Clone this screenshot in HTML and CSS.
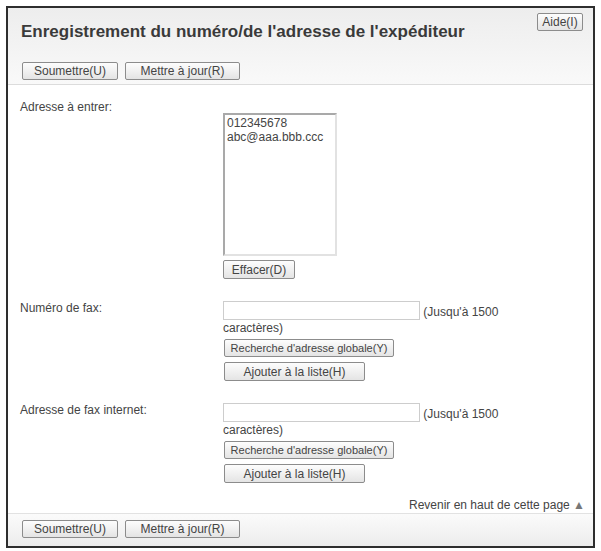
FILE: index.html
```html
<!DOCTYPE html>
<html lang="fr">
<head>
<meta charset="utf-8">
<title>Enregistrement</title>
<link rel="stylesheet" href="styles.css">
</head>
<body>
<div class="panel">
  <div class="header">
    <h1 class="title">Enregistrement du numéro/de l'adresse de l'expéditeur</h1>
    <button class="btn btn-help">Aide(I)</button>
    <div class="btn-row">
      <button class="btn btn-submit">Soumettre(U)</button>
      <button class="btn btn-update">Mettre à jour(R)</button>
    </div>
  </div>

  <div class="content">
    <div class="row row-first">
      <div class="label">Adresse à entrer:</div>
      <div class="field field-list">
        <div class="list">012345678<br>abc@aaa.bbb.ccc</div>
        <button class="btn btn-clear">Effacer(D)</button>
      </div>
    </div>

    <div class="row">
      <div class="label">Numéro de fax:</div>
      <div class="field">
        <span class="text-input"></span> (Jusqu'à 1500 caractères)
        <button class="btn btn-search">Recherche d'adresse globale(Y)</button>
        <button class="btn btn-add">Ajouter à la liste(H)</button>
      </div>
    </div>

    <div class="row">
      <div class="label">Adresse de fax internet:</div>
      <div class="field">
        <span class="text-input"></span> (Jusqu'à 1500 caractères)
        <button class="btn btn-search">Recherche d'adresse globale(Y)</button>
        <button class="btn btn-add">Ajouter à la liste(H)</button>
      </div>
    </div>

    <div class="top-link">Revenir en haut de cette page <span class="tri">▲</span></div>
  </div>

  <div class="footer">
    <button class="btn btn-submit">Soumettre(U)</button>
    <button class="btn btn-update">Mettre à jour(R)</button>
  </div>
</div>
</body>
</html>
```

FILE: styles.css
```css
html, body {
  margin: 0;
  padding: 0;
  background: #ffffff;
}

body {
  font-family: "Liberation Sans", Arial, sans-serif;
  font-size: 12px;
  color: #444444;
}

.panel {
  margin: 6px 0 0 6px;
  width: 585px;
  border: 2px solid #2e2e2e;
  background: #ffffff;
}

.header {
  position: relative;
  padding: 14px 0 4px 14px;
  background: linear-gradient(#ededed, #f9f9f9);
  border-bottom: 1px solid #dcdcdc;
}

.title {
  margin: 0 0 0 -1px;
  font-size: 17px;
  line-height: 20px;
  font-weight: bold;
  color: #3a3a3a;
}

.btn {
  display: block;
  box-sizing: border-box;
  height: 18px;
  padding: 0;
  border: 1px solid #8c8c8c;
  border-radius: 2px;
  background: linear-gradient(#fdfdfd, #e4e4e4);
  font-family: "Liberation Sans", Arial, sans-serif;
  font-size: 12px;
  line-height: 16px;
  color: #444444;
  text-align: center;
}

.btn-help {
  position: absolute;
  top: 5px;
  right: 10px;
  width: 46px;
}

.btn-row {
  display: flex;
  gap: 7px;
  margin-top: 20px;
}

.btn-submit { width: 96px; }
.btn-update { width: 115px; }

.content {
  padding: 0 8px 0 12px;
}

.row {
  display: grid;
  grid-template-columns: 203px 290px;
  margin-top: 22px;
}

.row-first {
  margin-top: 15px;
}

.label {
  line-height: 14px;
}

.field {
  line-height: 16px;
}

.field-list {
  padding-top: 13px;
}

.list {
  box-sizing: border-box;
  width: 114px;
  height: 143px;
  padding: 1px 2px;
  border-top: 2px solid #a9a9a9;
  border-left: 2px solid #a9a9a9;
  border-right: 2px solid #e2e2e2;
  border-bottom: 2px solid #e2e2e2;
  line-height: 14px;
}

.btn-clear {
  width: 72px;
  height: 19px;
  margin-top: 4px;
}

.text-input {
  display: inline-block;
  box-sizing: border-box;
  width: 197px;
  height: 19px;
  border: 1px solid #cdcdcd;
  vertical-align: bottom;
  background: #ffffff;
}

.btn-search {
  width: 170px;
  margin-top: 3px;
  margin-left: 1px;
  font-size: 11px;
}

.btn-add {
  width: 141px;
  height: 19px;
  margin-top: 5px;
  margin-left: 1px;
}

.top-link {
  margin-top: 14px;
  text-align: right;
  line-height: 16px;
}

.tri {
  font-size: 12px;
  color: #777777;
}

.footer {
  display: flex;
  gap: 7px;
  margin-top: 0;
  padding: 6px 0 8px 14px;
  background: linear-gradient(#fbfbfb, #ececec);
  border-top: 1px solid #e2e2e2;
}
```
